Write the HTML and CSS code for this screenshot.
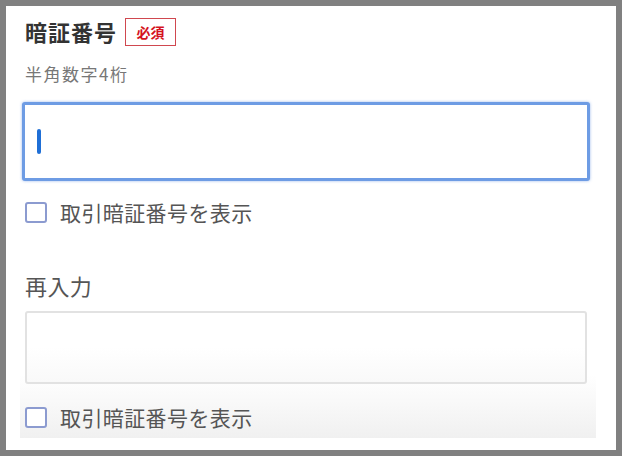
FILE: index.html
```html
<!DOCTYPE html>
<html lang="ja">
<head>
    <meta charset="UTF-8">
    <meta name="viewport" content="width=device-width, initial-scale=1.0">
    <title>暗証番号</title>
    <link rel="stylesheet" href="styles.css">
</head>
<body>

    <div class="frame">
        <div class="screen">

            <!-- 暗証番号 -->
            <div class="field-head">
                <h2 class="field-title">暗証番号</h2>
                <span class="badge">必須</span>
            </div>
            <p class="hint">半角数字4桁</p>

            <div class="pin-input focused">
                <span class="caret"></span>
            </div>

            <label class="check-row">
                <span class="check-box"></span>
                <span class="check-label">取引暗証番号を表示</span>
            </label>

            <!-- 再入力 -->
            <div class="reentry">
                <div class="reentry-title">再入力</div>
                <div class="pin-input plain"></div>

                <label class="check-row second">
                    <span class="check-box"></span>
                    <span class="check-label">取引暗証番号を表示</span>
                </label>
            </div>

        </div>
    </div>

</body>
</html>
```

FILE: styles.css
```css
body {
    margin: 0;
    padding: 6px;
    background-color: #808080;
    font-family: "Noto Sans CJK JP", "Noto Sans", sans-serif;
}

.frame {
    width: 610px;
    height: 444px;
    background-color: #fff;
}

.screen {
    width: 574px;
    height: 421px;
    padding: 11px 6px 0 16px;
    overflow: hidden;
}

.field-head {
    display: flex;
    align-items: center;
    padding-left: 3px;
    height: 29px;
}

.field-title {
    margin: 0;
    font-size: 22px;
    font-weight: bold;
    line-height: 29px;
    letter-spacing: 1px;
    color: #333;
}

.badge {
    margin-left: 8px;
    width: 49px;
    height: 26px;
    border: 1.5px solid #d0474f;
    display: flex;
    align-items: center;
    justify-content: center;
    font-size: 14px;
    font-weight: bold;
    color: #d4121e;
}

.hint {
    margin: 16px 0 0 3px;
    font-size: 17px;
    line-height: 24px;
    letter-spacing: 1.5px;
    color: #777;
}

.pin-input {
    box-sizing: border-box;
    display: flex;
    align-items: center;
    border-radius: 3px;
    background-color: #fff;
}

.pin-input.focused {
    margin-top: 16px;
    width: 568px;
    height: 79px;
    padding-left: 12px;
    border: 3px solid #6e9ce4;
    box-shadow: 0 0 3px rgba(90, 140, 225, 0.6);
}

.caret {
    width: 4px;
    height: 25px;
    border-radius: 2px;
    background-color: #1f6fd6;
}

.check-row {
    display: flex;
    align-items: center;
    height: 24px;
    margin-top: 19px;
    padding-left: 3px;
}

.check-box {
    box-sizing: border-box;
    width: 22px;
    height: 21px;
    border: 2px solid #8c9bd0;
    border-radius: 3px;
    background-color: #fff;
}

.check-label {
    margin-left: 13px;
    font-size: 21px;
    line-height: 24px;
    letter-spacing: 0.4px;
    color: #555;
}

.reentry {
    margin: 46px 0 0 -2px;
    height: 169px;
    padding-left: 2px;
    background: linear-gradient(to bottom, #fff 0, #fff 62%, #f0f0f0 100%);
}

.reentry-title {
    padding-left: 3px;
    font-size: 22px;
    line-height: 30px;
    letter-spacing: 0.4px;
    color: #555;
}

.pin-input.plain {
    margin: 11px 0 0 3px;
    width: 562px;
    height: 73px;
    border: 2px solid #e2e2e2;
    background: linear-gradient(to bottom, #fff 0, #fff 50%, #f9f9f9 100%);
}

.check-row.second {
    margin-top: 21px;
}
```
